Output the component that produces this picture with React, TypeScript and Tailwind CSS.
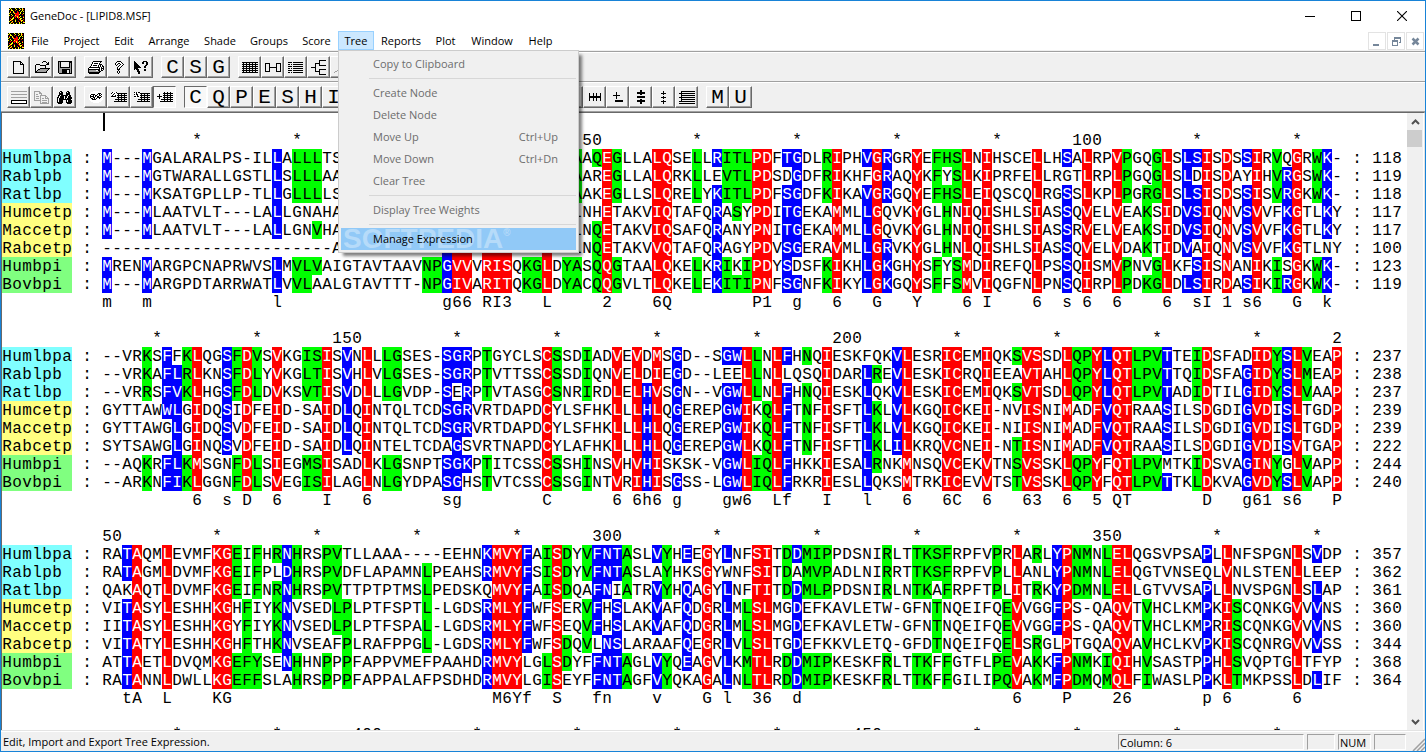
import type { ReactNode } from "react";

type Tone = "red" | "blue" | "green";

/** [tone, first column, number of columns, row numbers (1-8)] */
type Shade = [Tone, number, number, string];

interface Block {
  start: number;
  rows: string[];
  counts: number[];
  consensus: [number, string][];
  shades: Shade[];
}

const COLUMNS = 124;
const ALL = "12345678";
const LBP_BPI = "12378";
const CETP_BPI = "45678";

const TONES: Record<Tone, string> = {
  red: "bg-[#ff0000] text-white",
  blue: "bg-[#0000ff] text-white",
  green: "bg-[#00ff00] text-black",
};

const SEQUENCES = [
  { name: "Humlbpa", group: "bg-[#80ffff]" },
  { name: "Rablpb", group: "bg-[#80ffff]" },
  { name: "Ratlbp", group: "bg-[#80ffff]" },
  { name: "Humcetp", group: "bg-[#ffff80]" },
  { name: "Maccetp", group: "bg-[#ffff80]" },
  { name: "Rabcetp", group: "bg-[#ffff80]" },
  { name: "Humbpi", group: "bg-[#80ff80]" },
  { name: "Bovbpi", group: "bg-[#80ff80]" },
];

const BLOCKS: Block[] = [
  {
    start: 1,
    rows: [
      "M---MGALARALPS-ILLALLLTSTPEALGA-NPGLVARITDKGLQYAAQEGLLALQSELLRITLPDFTGDLRIPHVGRGRYEFHSLNIHSCELLHSALRPVPGQGLSLSISDSSIRVQGRWK-",
      "M---MGTWARALLGSTLLSLLLAAAPEALGT-NPGLVTRITDKGLEYAAREGLLALQRKLLEVTLPDSDGDFRIKHFGRAQYKFYSLKIPRFELLRGTLRPLPGQGLSLDISDAYIHVRGSWK-",
      "M---MKSATGPLLP-TLLGLLLLSIPRTQGV-NPAMVVRITDKGLEYAAKEGLLSLQRELYKITLPDFSGDFKIKAVGRGQYEFHSLEIQSCQLRGSSLKPLPGRGLSLSISDSSISVRGKWK-",
      "M---MLAATVLT---LALLGNAHACSKGTSH-EAGIVCRITKPALLVLNHETAKVIQTAFQRASYPDITGEKAMMLLGQVKYGLHNIQISHLSIASSQVELVEAKSIDVSIQNVSVVFKGTLKY",
      "M---MLAATVLT---LALLGNVHACSKGTSH-EAGIVCRITKPALLVLNQETAKVIQSAFQRANYPNITGEKAMMLLGQVKYGLHNIQISHLSIASSRVELVEAKSIDVSIQNVSVVFKGTLKY",
      "-----------------------ACPKGASY-EAGIVCRITKPALLVLNQETAKVVQTAFQRAGYPDVSGERAVMLLGRVKYGLHNLQISHLSIASSQVELVDAKTIDVAIQNVSVVFKGTLNY",
      "MRENMARGPCNAPRWVSLMVLVAIGTAVTAAVNPGVVVRISQKGLDYASQQGTAALQKELKRIKIPDYSDSFKIKHLGKGHYSFYSMDIREFQLPSSQISMVPNVGLKFSISNANIKISGKWK-",
      "M---MARGPDTARRWATLVVLAALGTAVTTT-NPGIVARITQKGLDYACQQGVLTLQKELEKITIPNFSGNFKIKYLGKGQYSFFSMVIQGFNLPNSQIRPLPDKGLDLSIRDASIKIRGKWK-",
    ],
    counts: [118, 119, 118, 117, 117, 100, 123, 119],
    consensus: [
      [0, "m"], [4, "m"], [17, "l"], [34, "g66"], [38, "RI3"], [44, "L"], [50, "2"], [55, "6Q"],
      [65, "P1"], [69, "g"], [73, "6"], [77, "G"], [81, "Y"], [86, "6"], [88, "I"], [93, "6"],
      [96, "s"], [98, "6"], [101, "6"], [106, "6"], [109, "sI"], [112, "1"], [114, "s6"], [119, "G"], [122, "k"],
    ],
    shades: [
      ["blue", 0, 1, "1234578"],
      ["blue", 4, 1, "1234578"],
      ["blue", 17, 1, "1234578"],
      ["green", 19, 2, LBP_BPI],
      ["green", 21, 1, "12357"],
      ["green", 32, 2, LBP_BPI],
      ["blue", 34, 1, ALL],
      ["red", 35, 2, ALL],
      ["red", 38, 3, ALL],
      ["green", 42, 2, LBP_BPI],
      ["red", 44, 1, ALL],
      ["green", 46, 2, LBP_BPI],
      ["green", 49, 1, "15678"],
      ["red", 50, 1, ALL],
      ["green", 51, 1, LBP_BPI],
      ["red", 55, 2, ALL],
      ["green", 59, 1, LBP_BPI],
      ["blue", 61, 1, "1345678"],
      ["green", 62, 1, LBP_BPI],
      ["green", 63, 1, "12348"],
      ["green", 64, 1, LBP_BPI],
      ["red", 65, 2, ALL],
      ["blue", 68, 1, "1345678"],
      ["blue", 69, 1, "1234568"],
      ["green", 72, 1, LBP_BPI],
      ["red", 73, 1, ALL],
      ["blue", 76, 1, "1345678"],
      ["red", 77, 1, ALL],
      ["blue", 78, 1, "123678"],
      ["red", 81, 1, ALL],
      ["green", 83, 1, LBP_BPI],
      ["green", 84, 1, "13456"],
      ["green", 85, 1, LBP_BPI],
      ["red", 86, 1, ALL],
      ["red", 88, 1, ALL],
      ["red", 93, 1, ALL],
      ["blue", 96, 1, "1345678"],
      ["red", 98, 1, ALL],
      ["red", 101, 1, ALL],
      ["green", 102, 1, LBP_BPI],
      ["green", 104, 1, "34568"],
      ["green", 105, 1, LBP_BPI],
      ["red", 106, 1, ALL],
      ["blue", 108, 1, "1234568"],
      ["blue", 109, 1, "134578"],
      ["red", 110, 1, ALL],
      ["red", 112, 1, ALL],
      ["blue", 114, 1, "134568"],
      ["red", 115, 1, ALL],
      ["green", 117, 1, LBP_BPI],
      ["blue", 118, 1, "234568"],
      ["red", 119, 1, ALL],
      ["green", 121, 1, LBP_BPI],
      ["blue", 122, 1, "1234578"],
    ],
  },
  {
    start: 125,
    rows: [
      "--VRKSFFKLQGSFDVSVKGISISVNLLLGSES-SGRPTGYCLSCSSDIADVEVDMSGD--SGWLLNLFHNQIESKFQKVLESRICEMIQKSVSSDLQPYLQTLPVTTEIDSFADIDYSLVEAP",
      "--VRKAFLRLKNSFDLYVKGLTISVHLVLGSES-SGRPTVTTSSCSSDIQNVELDIEGD--LEELLNLLQSQIDARLREVLESKICRQIEEAVTAHLQPYLQTLPVTTQIDSFAGIDYSLMEAP",
      "--VRRSFVKLHGSFDLDVKSVTISVDLLLGVDP-SERPTVTASGCSNRIRDLELHVSGN--VGWLLNLFHNQIESKLQKVLESKICEMIQKSVTSDLQPYLQTLPVTADIDTILGIDYSLVAAP",
      "GYTTAWWLGIDQSIDFEID-SAIDLQINTQLTCDSGRVRTDAPDCYLSFHKLLLHLQGEREPGWIKQLFTNFISFTLKLVLKGQICKEI-NVISNIMADFVQTRAASILSDGDIGVDISLTGDP",
      "GYTTAWGLGIDQSVDFEID-SAIDLQINTQLTCDSGRVRTDAPDCYLSFHKLLLHLQGEREPGWIKQLFTNFISFTLKLVLKGQICKEI-NIISNIMADFVQTRAASILSDGDIGVDISLTGDP",
      "SYTSAWGLGINQSVDFEID-SAIDLQINTELTCDAGSVRTNAPDCYLAFHKLLLHLQGEREPGWLKQLFTNFISFTLKLILKRQVCNEI-NTISNIMADFVQTRAASILSDGDIGVDISVTGAP",
      "--AQKRFLKMSGNFDLSIEGMSISADLKLGSNPTSGKPTITCSSCSSHINSVHVHISKSK-VGWLIQLFHKKIESALRNKMNSQVCEKVTNSVSSKLQPYFQTLPVMTKIDSVAGINYGLVAPP",
      "--ARKNFIKLGGNFDLSVEGISILAGLNLGYDPASGHSTVTCSSCSSGINTVRIHISGSS-LGWLIQLFRKRIESLLQKSMTRKICEVVTSTVSSKLQPYFQTLPVTTKLDKVAGVDYSLVAPP",
    ],
    counts: [237, 238, 237, 239, 239, 222, 244, 240],
    consensus: [
      [9, "6"], [12, "s"], [14, "D"], [17, "6"], [22, "I"], [26, "6"], [34, "sg"], [44, "C"],
      [51, "6"], [53, "6h6"], [57, "g"], [62, "gw6"], [67, "Lf"], [72, "I"], [76, "l"], [80, "6"],
      [84, "6C"], [88, "6"], [92, "63"], [96, "6"], [99, "5"], [101, "QT"], [110, "D"], [114, "g61"],
      [118, "s6"], [123, "P"],
    ],
    shades: [
      ["green", 4, 1, LBP_BPI],
      ["blue", 6, 1, "123478"],
      ["blue", 7, 1, "2345678"],
      ["green", 8, 1, LBP_BPI],
      ["red", 9, 1, ALL],
      ["blue", 12, 1, "123456"],
      ["green", 13, 1, LBP_BPI],
      ["red", 14, 1, ALL],
      ["green", 15, 1, LBP_BPI],
      ["red", 17, 1, ALL],
      ["green", 20, 2, LBP_BPI],
      ["red", 22, 1, ALL],
      ["blue", 24, 1, "123456"],
      ["red", 26, 1, ALL],
      ["green", 28, 2, LBP_BPI],
      ["blue", 34, 1, "1234578"],
      ["blue", 35, 1, "1245678"],
      ["blue", 36, 1, "123457"],
      ["green", 38, 1, LBP_BPI],
      ["red", 44, 1, ALL],
      ["green", 45, 1, LBP_BPI],
      ["green", 48, 1, LBP_BPI],
      ["red", 51, 1, ALL],
      ["red", 53, 1, ALL],
      ["blue", 54, 1, "345678"],
      ["red", 55, 1, ALL],
      ["blue", 57, 1, "1234568"],
      ["blue", 62, 2, "1345678"],
      ["red", 64, 1, ALL],
      ["green", 65, 1, LBP_BPI],
      ["green", 66, 1, CETP_BPI],
      ["red", 67, 1, ALL],
      ["blue", 68, 1, "1345678"],
      ["green", 70, 1, "13456"],
      ["red", 72, 1, ALL],
      ["blue", 76, 1, "2345678"],
      ["green", 77, 1, "24567"],
      ["blue", 79, 1, "123456"],
      ["red", 80, 1, ALL],
      ["red", 84, 2, ALL],
      ["red", 88, 1, ALL],
      ["green", 91, 1, "13678"],
      ["red", 92, 2, ALL],
      ["red", 96, 1, ALL],
      ["green", 97, 2, LBP_BPI],
      ["red", 99, 1, ALL],
      ["blue", 100, 1, "123456"],
      ["red", 101, 2, ALL],
      ["green", 103, 3, LBP_BPI],
      ["blue", 106, 1, "1234568"],
      ["green", 109, 1, LBP_BPI],
      ["red", 110, 1, ALL],
      ["blue", 114, 1, "2345678"],
      ["red", 115, 2, ALL],
      ["green", 117, 1, LBP_BPI],
      ["blue", 118, 1, "1234568"],
      ["red", 119, 1, ALL],
      ["green", 120, 1, LBP_BPI],
      ["red", 123, 1, ALL],
    ],
  },
  {
    start: 249,
    rows: [
      "RATAQMLEVMFKGEIFHRNHRSPVTLLAAA----EEHNKMVYFAISDYVFNTASLVYHEEGYLNFSITDDMIPPDSNIRLTTKSFRPFVPRLARLYPNMNLELQGSVPSAPLLNFSPGNLSVDP",
      "RATAGMLDVMFKGEIFPLDHRSPVDFLAPAMNLPEAHSRMVYFSISDYVFNTASLAYHKSGYWNFSITDAMVPADLNIRRTTKSFRPFVPLLANLYPNMNLELQGTVNSEQLVNLSTENLLEEP",
      "QAKAQTLDVMFKGEIFNRNHRSPVTTPTPTMSLPEDSKQMVYFAISDQAFNIATRVYHQAGYLNFTITDDMLPPDSNIRLNTKAFRPFTPLITRKYPDMNLELLGTVVSAPLLNVSPGNLSLAP",
      "VITASYLESHHKGHFIYKNVSEDLPLPTFSPTL-LGDSRMLYFWFSERVFHSLAKVAFQDGRLMLSLMGDEFKAVLETW-GFNTNQEIFQEVVGGFPS-QAQVTVHCLKMPKISCQNKGVVVNS",
      "IITASYLESHHKGYFIYKNVSEDLPLPTFSPAL-LGDSRMLYFWFSEQVFHSLAKVAFQDGRLMLSLMGDEFKAVLETW-GFNTNQEIFQEVVGGFPS-QAQVTVHCLKMPRISCQNKGVVVNS",
      "VITATYLESHHKGHFTHKNVSEAFPLRAFPPGL-LGDSRMLYFWFSDQVLNSLARAAFQEGRLVLSLTGDEFKKVLETQ-GFDTNQEIFQELSRGLPTGQAQVAVHCLKVPKISCQNRGVVVSS",
      "ATTAETLDVQMKGEFYSENHHNPPPFAPPVMEFPAAHDRMVYLGLSDYFFNTAGLVYQEAGVLKMTLRDDMIPKESKFRLTTKFFGTFLPEVAKKFPNMKIQIHVSASTPPHLSVQPTGLTFYP",
      "RATANNLDWLLKGEFFSLAHRSPPPFAPPALAFPSDHDRMVYLGISEYFFNTAGFVYQKAGALNLTLRDDMIPKESKFRLTTKFFGILIPQVAKMFPDMQMQLFIWASLPPKLTMKPSSLDLIF",
    ],
    counts: [357, 362, 361, 360, 360, 344, 368, 364],
    consensus: [
      [2, "tA"], [6, "L"], [11, "KG"], [39, "M6Yf"], [45, "S"], [49, "fn"], [55, "v"], [60, "G"],
      [62, "l"], [65, "36"], [69, "d"], [91, "6"], [96, "P"], [101, "26"], [110, "p"], [112, "6"], [119, "6"],
    ],
    shades: [
      ["blue", 2, 1, "1245678"],
      ["red", 3, 1, ALL],
      ["red", 6, 1, ALL],
      ["red", 11, 2, ALL],
      ["green", 13, 1, LBP_BPI],
      ["green", 14, 1, CETP_BPI],
      ["green", 15, 1, LBP_BPI],
      ["green", 17, 1, "13456"],
      ["blue", 18, 1, "1234567"],
      ["green", 19, 1, LBP_BPI],
      ["green", 22, 1, LBP_BPI],
      ["green", 23, 1, "12345"],
      ["green", 24, 1, CETP_BPI],
      ["green", 32, 1, "23456"],
      ["blue", 38, 1, "1245678"],
      ["red", 39, 3, ALL],
      ["blue", 42, 1, "123456"],
      ["green", 44, 1, LBP_BPI],
      ["red", 45, 1, ALL],
      ["green", 46, 1, "12367"],
      ["green", 48, 1, "12456"],
      ["blue", 49, 1, "1234578"],
      ["blue", 50, 1, "123678"],
      ["blue", 51, 1, "1245678"],
      ["green", 52, 1, LBP_BPI],
      ["blue", 55, 1, "134578"],
      ["green", 56, 1, LBP_BPI],
      ["blue", 58, 1, "134567"],
      ["red", 60, 1, ALL],
      ["blue", 62, 1, "1345678"],
      ["green", 64, 1, CETP_BPI],
      ["red", 65, 2, ALL],
      ["green", 68, 1, LBP_BPI],
      ["blue", 69, 1, "1345678"],
      ["green", 70, 3, LBP_BPI],
      ["green", 78, 1, LBP_BPI],
      ["green", 81, 2, LBP_BPI],
      ["green", 83, 1, "12456"],
      ["green", 84, 1, LBP_BPI],
      ["green", 89, 1, LBP_BPI],
      ["green", 90, 1, CETP_BPI],
      ["red", 91, 1, ALL],
      ["green", 93, 1, "13678"],
      ["blue", 95, 1, "1234578"],
      ["red", 96, 1, ALL],
      ["green", 97, 2, LBP_BPI],
      ["green", 100, 1, LBP_BPI],
      ["red", 101, 2, ALL],
      ["green", 104, 1, CETP_BPI],
      ["blue", 110, 1, "1345678"],
      ["red", 112, 1, ALL],
      ["green", 113, 1, CETP_BPI],
      ["red", 119, 1, ALL],
      ["blue", 121, 1, "134568"],
    ],
  },
  { start: 373, rows: [], counts: [], consensus: [], shades: [] },
];

/** A star on every tenth column and the number itself on every fiftieth. */
function rulerText(start: number) {
  const chars: string[] = Array(COLUMNS).fill(" ");
  for (let pos = start; pos < start + COLUMNS + 3; pos++) {
    const col = pos - start;
    if (pos % 50 === 0) {
      const digits = String(pos);
      for (let d = 0; d < digits.length; d++) {
        const at = col - digits.length + 1 + d;
        if (at >= 0 && at < COLUMNS) chars[at] = digits[d];
      }
    } else if (pos % 10 === 0 && col < COLUMNS) {
      chars[col] = "*";
    }
  }
  return chars.join("");
}

function consensusText(parts: [number, string][]) {
  return parts.reduce((line, [col, text]) => line.padEnd(col) + text, "");
}

function rowTones(shades: Shade[], row: number) {
  const tones: (Tone | undefined)[] = Array(COLUMNS).fill(undefined);
  for (const [tone, col, width, rows] of shades) {
    if (rows.includes(String(row))) tones.fill(tone, col, col + width);
  }
  return tones;
}

function Residues({ text, tones = [] }: { text: string; tones?: (Tone | undefined)[] }) {
  return (
    <>
      {[...text].map((char, i) => {
        const tone = tones[i];
        return (
          <span
            key={i}
            className={`inline-block h-[18px] w-[10px] align-top text-center leading-5 ${tone ? TONES[tone] : ""}`}
          >
            {char}
          </span>
        );
      })}
    </>
  );
}

function AlignmentBlock({ block }: { block: Block }) {
  return (
    <table className="mb-[18px] table-fixed border-collapse whitespace-pre">
      <tbody>
        <tr className="h-[18px]">
          <td className="w-[80px] p-0" />
          <td className="w-[20px] p-0" />
          <td className="w-[1250px] p-0">
            <Residues text={rulerText(block.start)} />
          </td>
          <td className="w-[20px] p-0" />
          <td className="w-[30px] p-0" />
        </tr>
        {block.rows.map((text, i) => (
          <tr key={i} className="h-[18px]">
            <th scope="row" className="p-0 text-left font-normal">
              <span className={`block h-[18px] w-[70px] ${SEQUENCES[i].group}`}>
                <Residues text={SEQUENCES[i].name} />
              </span>
            </th>
            <td className="p-0">
              <Residues text=":" />
            </td>
            <td className="p-0">
              <Residues text={text} tones={rowTones(block.shades, i + 1)} />
            </td>
            <td className="p-0">
              <Residues text=":" />
            </td>
            <td className="p-0">
              <Residues text={String(block.counts[i])} />
            </td>
          </tr>
        ))}
        {block.consensus.length > 0 && (
          <tr className="h-[18px]">
            <td colSpan={2} className="p-0" />
            <td className="p-0">
              <Residues text={consensusText(block.consensus)} />
            </td>
            <td colSpan={2} className="p-0" />
          </tr>
        )}
      </tbody>
    </table>
  );
}

const PIXEL_COLOURS: Record<string, string> = {
  "#": "#000000",
  g: "#a0a0a0",
  w: "#ffffff",
  r: "#ff0000",
  y: "#ffff00",
};

function PixelIcon({ rows }: { rows: string[] }) {
  const width = Math.max(...rows.map((row) => row.length));
  return (
    <svg
      width={width}
      height={rows.length}
      viewBox={`0 0 ${width} ${rows.length}`}
      shapeRendering="crispEdges"
      aria-hidden="true"
    >
      {rows.flatMap((row, y) =>
        [...row].map((c, x) =>
          PIXEL_COLOURS[c] ? (
            <rect key={`${x}-${y}`} x={x} y={y} width={1} height={1} fill={PIXEL_COLOURS[c]} />
          ) : null,
        ),
      )}
    </svg>
  );
}

const LOGO = [
  "#y####y###y##y##",
  "y#y####y###y#yr#",
  "##yy##r###y##y##",
  "#r##y###r###y#y#",
  "#y##yr##rr#y####",
  "y####yrrrr#y##y#",
  "##y###rrrry##r##",
  "y##y##yrrr######",
  "##r##rrryr#y##r#",
  "####y#r#yry###y#",
  "#r#yy####r#yy###",
  "##yy##r###ry##r#",
  "#yr###y####ryy##",
  "y##y##y##r##y#r#",
  "##yr######y###yy",
  "#y##y##y##y#y###",
];

const ICONS: Record<string, string[]> = {
  new: [
    "########...",
    "#......##..",
    "#......#.#.",
    "#......####",
    "#.........#",
    "#.........#",
    "#.........#",
    "#.........#",
    "#.........#",
    "#.........#",
    "#.........#",
    "#.........#",
    "###########",
  ],
  open: [
    ".........###....",
    "........#...#.#.",
    ".............##.",
    "..####......###.",
    ".#....######....",
    ".#.........#....",
    ".#.........#....",
    ".#....##########",
    ".#..##gggggggg#.",
    ".#.#ggggggggg#..",
    ".##ggggggggg#...",
    ".############...",
  ],
  save: [
    "##############",
    "#g#........###",
    "#g#........#g#",
    "#g#........#g#",
    "#g#........#g#",
    "#g#........#g#",
    "#g##########g#",
    "#gggggggggggg#",
    "#ggg########g#",
    "#ggg#####..#g#",
    "#ggg#####..#g#",
    "#ggg#####..#g#",
    ".#############",
  ],
  print: [
    ".....#########..",
    "....#wwwwwww#...",
    "....#w####w#....",
    "...#wwwwwww###..",
    "...#w####w#w#w#.",
    "..#wwwwwww#w#w##",
    ".###########w#w#",
    "#wwwwwwwwww#w###",
    "############w#w#",
    "#gggggggww##w##.",
    "#gggggggggg##...",
    "############....",
    ".##########.....",
  ],
  help: [
    "...####...",
    "..#wwww#..",
    ".#ww##ww#.",
    ".#w#..#ww#",
    "..#..#ww#.",
    "....#ww#..",
    "...#ww#...",
    "...#w#....",
    "...###....",
    "....#.....",
    "...#w#....",
    "...#w#....",
    "....#.....",
  ],
  pointer: [
    "#........####..",
    "##......##..##.",
    "###.....##..##.",
    "####........##.",
    "#####......##..",
    "######....##...",
    "#######...##...",
    "####...........",
    "#.###.....##...",
    "...##.....##...",
    "...###.........",
    "....##.........",
    "....##.........",
  ],
  grid: [
    "################",
    ".#..#..#..#..#..",
    "################",
    ".#..#..#..#..#..",
    "################",
    ".#..#..#..#..#..",
    "################",
    ".#..#..#..#..#..",
    "################",
    ".#..#..#..#..#..",
    "################",
  ],
  links: [
    "#####......#####",
    "#...#......#...#",
    "#...#......#...#",
    "#...#......#...#",
    "#...########...#",
    "#...#......#...#",
    "#...#......#...#",
    "#...#......#...#",
    "#####......#####",
  ],
  report: [
    "####.##########.",
    "................",
    "##.#.##########.",
    "................",
    "####.##########.",
    "................",
    "##.#.##########.",
    "................",
    "####.##########.",
    "................",
    "##.#.##########.",
  ],
  tree: [
    "........#######",
    "........#......",
    "........#......",
    "....#####......",
    "....#...#......",
    "....#...#######",
    "....#..........",
    "#####..........",
    "....#..........",
    "....#...#######",
    "....#...#......",
    "....#####......",
    "........#......",
    "........#......",
    "........#######",
  ],
  curve: [
    "............ggg",
    "..........gg...",
    "........gg.....",
    ".......g.......",
    "......g........",
    "......g........",
    ".....g.........",
    "....g..........",
    "....g..........",
    "...g...........",
    ".gg............",
    "g..............",
  ],
  pane: [
    "gggggggggggggggg",
    "................",
    "................",
    "gggggggggggggggg",
    "................",
    "................",
    "gggggggggggggggg",
    "................",
    "................",
    "################",
    "#wwwwwwwwwwwwww#",
    "#wwwwwwwwwwwwww#",
    "################",
  ],
  copy: [
    "gggggg..........",
    "g....gg.........",
    "g....ggg........",
    "g.gg...g........",
    "g.....gggggg....",
    "g.ggg.g....gg...",
    "g.....g....g.g..",
    "g.ggg.g.gg.gggg.",
    "g.....g.......g.",
    "ggggggg.ggggg.g.",
    "......g.......g.",
    "......g.ggggg.g.",
    "......ggggggggg.",
  ],
  find: [
    "...##.....##...",
    "..#w##...#w##..",
    "..####...####..",
    "..####...####..",
    ".##w#######w##.",
    ".#w####w##w###.",
    "##w####w##w####",
    "#w#####w#w#####",
    "#w############w",
    "#w####...#w####",
    "#w####...#w####",
    "######...######",
    ".####.....####.",
  ],
  recolor: [
    "....wwwwww....",
    "..wwwwwwwwww..",
    ".wwwwwwww###w.",
    "ww####ww#w#w#w",
    "w#ww#w##ww##ww",
    "w####w#w##ww#w",
    "w#ww##ww####ww",
    "ww##w#w#ww#www",
    "www####wwwwwww",
    ".wwwwwwwwwwww.",
    "..wwwwwwwwww..",
    "....wwwwww....",
  ],
  gridA: [
    "w#www#w.........",
    "#ww#w.##########",
    "ww#www.#..#..#..",
    "w#ww#w##########",
    "#####w.#..#..#..",
    "wwwww.##########",
    ".......#..#..#..",
    "....############",
    ".......#..#..#..",
    "...#############",
  ],
  gridB: [
    "#w#w##w.........",
    "ww#ww.##########",
    "#w##ww.#..#..#..",
    "www#ww##########",
    "##w##w.#..#..#..",
    "wwwww.##########",
    ".......#..#..#..",
    "....############",
    ".......#..#..#..",
    "...#############",
  ],
  gridC: [
    ".......#..#..#..",
    "......##########",
    "..#....#..#..#..",
    "..#...##########",
    "#####..#..#..#..",
    "..#...##########",
    "..#....#..#..#..",
    "....############",
    ".......#..#..#..",
    "...#############",
  ],
  spread: [
    "#...#..#...#",
    "#...#..#...#",
    "#...#..#...#",
    "############",
    "############",
    "#...#..#...#",
    "#...#..#...#",
    "#...#..#...#",
  ],
  insertGap: [
    "...#......",
    "...#......",
    "...#......",
    "#######...",
    "...#......",
    "...#......",
    "...#......",
    "..........",
    "..########",
    "..########",
  ],
  shiftRows: [
    "...##...",
    "...##...",
    "########",
    "########",
    "...##...",
    "........",
    "########",
    "########",
    "........",
    "...##...",
    "########",
    "########",
    "...##...",
    "...##...",
  ],
  dots: [
    "..#..",
    "..#..",
    "#####",
    "..#..",
    ".....",
    "..#..",
    "#####",
    "..#..",
    ".....",
    "..#..",
    "#####",
    "..#..",
    "..#..",
  ],
  lines: [
    "..##############",
    "..#.............",
    "################",
    "..#.............",
    "..##############",
    "..#.............",
    "################",
    "..#.............",
    "..##############",
    "..#.............",
    "################",
    "................",
    "################",
  ],
};

interface Tool {
  label: string;
  icon?: keyof typeof ICONS;
  pressed?: boolean;
}

const letters = (text: string): Tool[] => [...text].map((label) => ({ label }));

const MAIN_TOOLS: Tool[][] = [
  [
    { label: "New", icon: "new" },
    { label: "Open", icon: "open" },
    { label: "Save", icon: "save" },
  ],
  [
    { label: "Print", icon: "print" },
    { label: "About", icon: "help" },
    { label: "Context help", icon: "pointer" },
  ],
  letters("CSG"),
  [
    { label: "Alignment view", icon: "grid" },
    { label: "Linked view", icon: "links" },
    { label: "Report view", icon: "report" },
    { label: "Tree view", icon: "tree" },
    { label: "Plot view", icon: "curve" },
  ],
];

const SHADE_TOOLS: Tool[][] = [
  [
    { label: "Configure", icon: "pane" },
    { label: "Copy", icon: "copy" },
    { label: "Find", icon: "find" },
  ],
  [
    { label: "Recolor", icon: "recolor" },
    { label: "Grab and drag", icon: "gridA" },
    { label: "Grab and slide", icon: "gridB" },
    { label: "Insert residue", icon: "gridC", pressed: true },
  ],
  [{ label: "C", pressed: true }, ...letters("QPESHID")],
  [
    ...letters("ATRLNFBK"),
    { label: "Narrow", icon: "spread" },
    { label: "Widen", icon: "spread" },
    { label: "Insert gap", icon: "insertGap" },
    { label: "Shift rows", icon: "shiftRows" },
    { label: "Shift columns", icon: "dots" },
    { label: "Row lines", icon: "lines" },
  ],
  letters("MU"),
];

const RAISED = "border-t-white border-l-white border-r-[#696969] border-b-[#696969] bg-[#f0f0f0] shadow-[inset_-1px_-1px_#a0a0a0]";
const SUNKEN = "border-t-[#696969] border-l-[#696969] border-r-white border-b-white bg-[#f8f8f8]";

function ToolButton({ tool }: { tool: Tool }) {
  return (
    <button
      type="button"
      aria-label={tool.label}
      aria-pressed={tool.pressed}
      className={`flex h-[22px] w-[23px] items-center justify-center border ${tool.pressed ? SUNKEN : RAISED}`}
    >
      {tool.icon ? (
        <PixelIcon rows={ICONS[tool.icon]} />
      ) : (
        <span className="pt-0.5 font-['Liberation_Mono',monospace] text-[21px] leading-5">{tool.label}</span>
      )}
    </button>
  );
}

function Toolbar({ label, groups }: { label: string; groups: Tool[][] }) {
  return (
    <div role="toolbar" aria-label={label} className="border-t border-[#a0a0a0]">
      <div className="flex gap-2 border-t border-white py-[3px] pl-1.5">
        {groups.map((group, i) => (
          <div key={i} className="flex">
            {group.map((tool) => (
              <ToolButton key={tool.label} tool={tool} />
            ))}
          </div>
        ))}
      </div>
    </div>
  );
}

function Separator() {
  return (
    <li role="separator" className="flex h-[7px] items-center pl-7">
      <div className="h-px flex-1 bg-[#d7d7d7]" />
    </li>
  );
}

function MenuItem({ label, shortcut, children }: { label: string; shortcut?: string; children?: ReactNode }) {
  return (
    <li>
      <button
        type="button"
        disabled={!children}
        className="relative flex h-[22px] w-full items-center justify-between bg-[#91c9f7] pr-[18px] pl-8 text-black disabled:bg-transparent disabled:text-[#6d6d6d]"
      >
        {children}
        <span className="relative">{label}</span>
        {shortcut && <span>{shortcut}</span>}
      </button>
    </li>
  );
}

function TreeMenu() {
  return (
    <ul className="absolute top-full left-0 z-10 w-[241px] border border-[#cccccc] bg-[#f0f0f0] p-0.5 shadow-[4px_4px_3px_-1px_rgba(0,0,0,0.5)]">
      <MenuItem label="Copy to Clipboard" />
      <Separator />
      <MenuItem label="Create Node" />
      <MenuItem label="Delete Node" />
      <MenuItem label="Move Up" shortcut="Ctrl+Up" />
      <MenuItem label="Move Down" shortcut="Ctrl+Dn" />
      <MenuItem label="Clear Tree" />
      <Separator />
      <MenuItem label="Display Tree Weights" />
      <Separator />
      <MenuItem label="Manage Expression">
        <span className="absolute top-0 left-0.5 flex font-['Liberation_Sans',sans-serif] text-[28px] leading-[22px] font-bold text-white/35">
          SOFTPEDIA
          <span className="text-[10px] leading-[10px]">®</span>
        </span>
      </MenuItem>
    </ul>
  );
}

const MENUS = [
  { name: "File", width: "w-[32px]" },
  { name: "Project", width: "w-[51px]" },
  { name: "Edit", width: "w-[34px]" },
  { name: "Arrange", width: "w-[56px]" },
  { name: "Shade", width: "w-[46px]" },
  { name: "Groups", width: "w-[52px]" },
  { name: "Score", width: "w-[43px]" },
  { name: "Tree", width: "w-[36px]" },
  { name: "Reports", width: "w-[54px]" },
  { name: "Plot", width: "w-[35px]" },
  { name: "Window", width: "w-[58px]" },
  { name: "Help", width: "w-[39px]" },
];

const MDI_BUTTON = "flex size-[18px] items-center justify-center border border-[#e3e3e3] bg-white";

function MenuBar() {
  return (
    <nav className="flex h-[19px] items-center bg-white pl-[7px]">
      <PixelIcon rows={LOGO} />
      <div className="flex h-full flex-1">
        {MENUS.map(({ name, width }) => (
          <div key={name} className={`relative ${width}`}>
            <button
              type="button"
              className={`h-full w-full border ${
                name === "Tree" ? "border-[#99d1ff] bg-[#cce8ff]" : "border-transparent"
              }`}
            >
              {name}
            </button>
            {name === "Tree" && <TreeMenu />}
          </div>
        ))}
      </div>
      <div className="flex gap-px pr-px">
        <button type="button" aria-label="Minimize document" className={MDI_BUTTON}>
          <svg width="16" height="16" shapeRendering="crispEdges">
            <path d="M4 11h6v2H4z" fill="#76879a" />
          </svg>
        </button>
        <button type="button" aria-label="Restore document" className={MDI_BUTTON}>
          <svg width="16" height="16" shapeRendering="crispEdges" fill="#76879a">
            <path d="M6 4h7v6h-2V9h1V6H7v1H6zM4 7h6v6H4zM5 9v3h4V9z" fillRule="evenodd" />
          </svg>
        </button>
        <button type="button" aria-label="Close document" className={MDI_BUTTON}>
          <svg width="16" height="16">
            <path d="M5.5 5.500l6 6M11.500 5.500l-6 6" stroke="#76879a" strokeWidth="2.500" />
          </svg>
        </button>
      </div>
    </nav>
  );
}

function TitleBar() {
  const control = "flex h-full w-[46px] items-center justify-center";
  return (
    <header className="flex h-[30px] items-center bg-white pl-2">
      <PixelIcon rows={LOGO} />
      <h1 className="flex-1 pl-[5px]">GeneDoc - [LIPID8.MSF]</h1>
      <button type="button" aria-label="Minimize" className={control}>
        <svg width="10" height="10" shapeRendering="crispEdges">
          <path d="M0 5h10v1H0z" />
        </svg>
      </button>
      <button type="button" aria-label="Maximize" className={control}>
        <svg width="10" height="10" shapeRendering="crispEdges">
          <path d="M.5.5h9v9h-9z" fill="none" stroke="#000" />
        </svg>
      </button>
      <button type="button" aria-label="Close" className={control}>
        <svg width="10" height="10">
          <path d="M0 0l10 10M10 0L0 10" stroke="#000" strokeWidth="1.100" />
        </svg>
      </button>
    </header>
  );
}

function ScrollBar() {
  const arrow = "flex h-[17px] w-full items-center justify-center";
  return (
    <div className="mr-px flex w-4 flex-col bg-[#f0f0f0]">
      <button type="button" aria-label="Scroll up" className={arrow}>
        <svg width="9" height="6">
          <path d="M1 5l3.500-3.500L8 5" fill="none" stroke="#505050" strokeWidth="2" />
        </svg>
      </button>
      <div className="mr-px h-[17px] bg-[#cdcdcd]" />
      <div className="flex-1" />
      <button type="button" aria-label="Scroll down" className={arrow}>
        <svg width="9" height="6">
          <path d="M1 1l3.500 3.500L8 1" fill="none" stroke="#505050" strokeWidth="2" />
        </svg>
      </button>
    </div>
  );
}

function StatusBar() {
  const pane = "h-4 border border-t-[#a0a0a0] border-l-[#a0a0a0] border-r-white border-b-white pl-px leading-4";
  return (
    <footer className="flex h-5 items-center gap-[3px] border-t border-white pl-0.5">
      <p className="flex-1">Edit, Import and Export Tree Expression.</p>
      <div className={`${pane} w-[186px]`}>Column: 6</div>
      <div className={`${pane} w-[28px]`} />
      <div className={`${pane} w-[33px]`}>NUM</div>
      <div className={`${pane} w-[32px]`} />
      <svg width="16" height="18" aria-hidden="true">
        <path d="M4 18L16 6M8 18l8-8M12 18l4-4" stroke="#a0a0a0" strokeWidth="1.500" />
      </svg>
    </footer>
  );
}

export default function App() {
  return (
    <div className="flex h-screen flex-col overflow-hidden border border-[#1883d7] bg-[#f0f0f0] font-['Segoe_UI','Open_Sans',sans-serif] text-[11px] leading-4 text-black">
      <TitleBar />
      <MenuBar />
      <div className="pt-px">
        <Toolbar label="Main" groups={MAIN_TOOLS} />
        <Toolbar label="Shading" groups={SHADE_TOOLS} />
      </div>
      <div className="border-t border-[#a0a0a0]" />
      <main className="flex min-h-0 flex-1 border-t border-r border-b border-t-[#696969] border-r-[#e3e3e3] border-b-[#e3e3e3] bg-white">
        <div className="min-w-0 flex-1 overflow-hidden border-l border-[#696969] font-['Courier_New','Liberation_Mono',monospace] text-[16px] leading-[18px]">
          <div className="flex h-[18px]">
            <div className="ml-[101px] w-0.5 bg-black" />
          </div>
          {BLOCKS.map((block) => (
            <AlignmentBlock key={block.start} block={block} />
          ))}
        </div>
        <ScrollBar />
      </main>
      <StatusBar />
    </div>
  );
}
